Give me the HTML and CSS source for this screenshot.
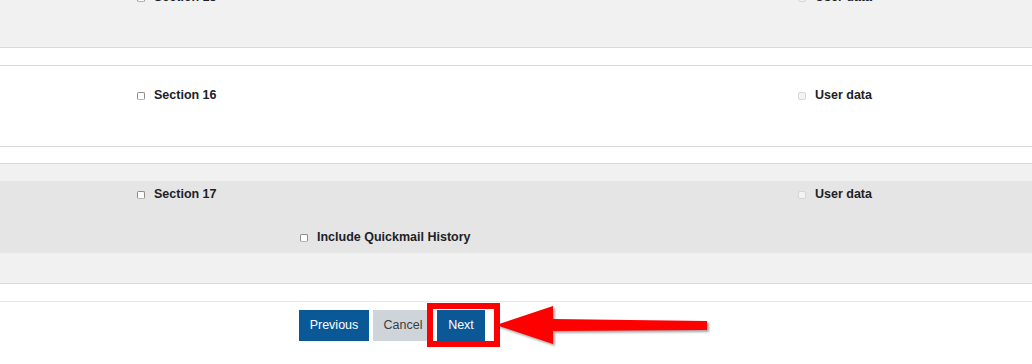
FILE: index.html
```html
<!DOCTYPE html>
<html lang="en">
<head>
<meta charset="utf-8">
<title>Backup settings</title>
<link rel="stylesheet" href="styles.css">
</head>
<body>
<div class="page">
  <div class="section section--gray">
    <div class="band">
      <div class="row">
        <label class="item item--section"><input type="checkbox" class="cb"><span>Section 15</span></label>
        <label class="item"><input type="checkbox" class="cb" disabled><span>User data</span></label>
      </div>
    </div>
  </div>
  <div class="section section--white">
    <div class="band">
      <div class="row">
        <label class="item item--section"><input type="checkbox" class="cb"><span>Section 16</span></label>
        <label class="item"><input type="checkbox" class="cb" disabled><span>User data</span></label>
      </div>
    </div>
  </div>
  <div class="section section--hl">
    <div class="band">
      <div class="row">
        <label class="item item--section"><input type="checkbox" class="cb"><span>Section 17</span></label>
        <label class="item"><input type="checkbox" class="cb" disabled><span>User data</span></label>
      </div>
      <div class="row row--sub">
        <label class="item"><input type="checkbox" class="cb"><span>Include Quickmail History</span></label>
      </div>
    </div>
  </div>
  <div class="footer">
    <div class="buttons">
      <button class="btn btn--primary btn--prev">Previous</button>
      <button class="btn btn--secondary">Cancel</button>
      <span class="highlight"><button class="btn btn--primary btn--next">Next</button></span>
    </div>
    <svg class="arrow" width="225" height="50" viewBox="0 0 225 50">
      <polygon points="6,25 63,6 63,19 217,21 217,30 63,31 63,44" fill="#ff0000"/>
    </svg>
  </div>
</div>
</body>
</html>
```
FILE: styles.css
```css
html, body {
  margin: 0;
  padding: 0;
  background: #ffffff;
}

body {
  font-family: "Liberation Sans", Arial, sans-serif;
  font-size: 12.5px;
  color: #1d2125;
  overflow: hidden;
}

.page {
  margin-top: -34px;
}

.section {
  border-top: 1px solid #d9d9d9;
  border-bottom: 1px solid #d9d9d9;
  padding: 17px 0 30px;
  margin-bottom: 17px;
}

.section--gray {
  background: #f1f1f1;
  padding-top: 18px;
  padding-bottom: 29px;
}

.section--white {
  background: #ffffff;
  margin-bottom: 16px;
}

.section--hl {
  background: #f1f1f1;
}

.section--hl .band {
  background: #e5e5e5;
  padding-top: 1px;
  padding-bottom: 4px;
}

.band {
  padding-bottom: 9px;
}

.row {
  display: flex;
  height: 24px;
  align-items: center;
  padding-left: 137px;
}

.row--sub {
  margin-top: 19px;
  padding-left: 300px;
}

.item {
  display: flex;
  align-items: center;
  font-weight: bold;
  line-height: 24px;
  white-space: nowrap;
}

.item--section {
  width: 661px;
}

.cb {
  appearance: none;
  -webkit-appearance: none;
  width: 8px;
  height: 8px;
  margin: 1px 9px 0 0;
  border: 1px solid #8c8c8c;
  border-bottom-color: #b5b5b5;
  border-radius: 2px;
  background: #ffffff;
  box-sizing: border-box;
}

.cb:disabled {
  border-color: #d6d6d6;
  background: #f3f3f3;
}

.footer {
  position: relative;
  border-top: 1px solid #e6e6e6;
  padding: 8px 0 30px 299px;
}

.buttons {
  display: flex;
  gap: 4px;
}

.btn {
  font-family: "Liberation Sans", Arial, sans-serif;
  font-size: 12.5px;
  height: 31px;
  width: 60px;
  padding: 0;
  text-align: center;
  border: none;
  border-radius: 0;
  line-height: 31px;
}

.btn--primary {
  background: #0b5896;
  color: #ffffff;
}

.btn--secondary {
  background: #ced4da;
  color: #3a3d40;
}

.btn--prev {
  width: 70px;
}

.btn--next {
  width: 48px;
}

.highlight {
  position: relative;
  display: flex;
}

.highlight::after {
  content: "";
  position: absolute;
  left: -10px;
  top: -7px;
  right: -15px;
  bottom: -6px;
  border: 6px solid #ff0000;
}

.arrow {
  position: absolute;
  left: 490px;
  top: -2px;
  filter: drop-shadow(2px 2px 1px rgba(0, 0, 0, 0.35));
}
```
